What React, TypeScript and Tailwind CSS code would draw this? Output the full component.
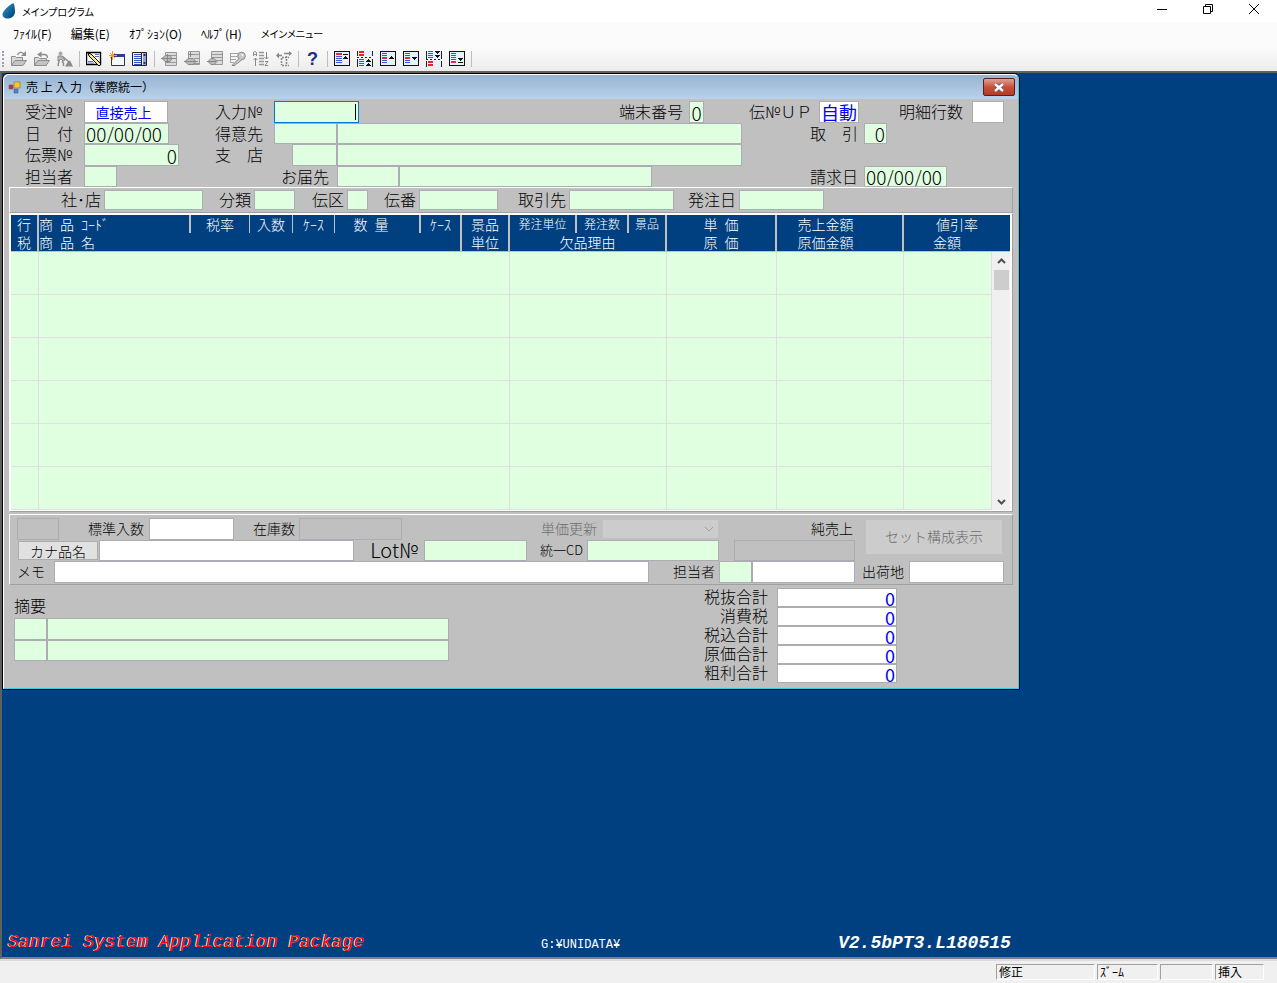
import React from 'react';

type BoxProps = {
  id: string
  label?: string
  className?: string
  value?: string
  disabled?: boolean
}

const Box: React.FC<BoxProps> = ({ id, label, className = 'bg-[#e0ffe0]', value = '', disabled }) => (
  <input
    id={id}
    type="text"
    aria-label={label}
    defaultValue={value}
    disabled={disabled}
    className={`h-full min-w-0 border border-[#abadb3] px-px outline-none ${className}`}
  />
);

type LabelProps = {
  htmlFor: string
  className?: string
  children: React.ReactNode
}

const Label: React.FC<LabelProps> = ({ htmlFor, className = '', children }) => (
  <label htmlFor={htmlFor} className={`shrink-0 pb-[2px] whitespace-pre ${className}`}>{children}</label>
);

const Icon: React.FC<{ children: React.ReactNode }> = ({ children }) => (
  <svg width="16" height="16" viewBox="0 0 16 16" fill="none" className="block">{children}</svg>
);

const OpenIcon = () => (
  <Icon>
    <path d="M.5 14.500v-9h4l1 1h6v3" fill="#d8d8d8" stroke="#8c8c8c" />
    <path d="M.5 14.500 4 9.500h11.500l-3.500 5z" fill="#c4c4c4" stroke="#8c8c8c" />
    <path d="M6.500 4c1-3 4-3.500 6.500-1" stroke="#8c8c8c" strokeWidth="1.300" />
    <path d="M10 5h5V0z" fill="#8c8c8c" />
  </Icon>
);

const BackIcon = () => (
  <Icon>
    <path d="M.5 14.500v-8h4l1 1h7v7z" fill="#d8d8d8" stroke="#8c8c8c" />
    <path d="M.5 14.500 4 9.500h11.500l-3.500 5z" fill="#c4c4c4" stroke="#8c8c8c" />
    <path d="M6 3.500h4c2.500 0 3.500 1 3.500 3.500" stroke="#8c8c8c" strokeWidth="1.300" />
    <path d="M3 3.500 7.500.5v6z" fill="#8c8c8c" />
  </Icon>
);

const WorkIcon = () => (
  <Icon>
    <circle cx="3.500" cy="2.500" r="2" fill="#a8a8a8" />
    <path d="M1 5h4l3 4-2 1-2-2-2 2H1z" fill="#b8b8b8" stroke="#8c8c8c" />
    <path d="M2 9.500 1 15M5 10l1.500 2v3M5 5l7 6" stroke="#8c8c8c" strokeWidth="1.500" />
    <path d="m8 15.500 3-5 2-1 3 6z" fill="#8c8c8c" />
  </Icon>
);

const EditIcon = () => (
  <Icon>
    <path d="M.5 1.500h14v12H.5z" fill="#fff" stroke="#000" strokeWidth="1.400" />
    <path d="M2 10.500h5M2 12h6M9 3.500h4M9 5.500h4" stroke="#5577cc" />
    <path d="m2 2 3 1 10 10-2 2L3 5z" fill="#ffe680" stroke="#000" />
  </Icon>
);

const NewWindowIcon = () => (
  <Icon>
    <path d="M2.500 3.500h13v11h-13z" fill="#f4f8ff" stroke="#333" />
    <path d="M3 3h13v3H3z" fill="#29417e" />
    <path d="M3.500 0v9M0 4.500h8M1 2l5 5M6 2 1 7" stroke="#f0a020" />
  </Icon>
);

const ListIcon = () => (
  <Icon>
    <path d="M.5 1.500h14v13H.5z" fill="#e8eeff" stroke="#222" />
    <path d="M2 3.500h7M2 5.500h7M2 7.500h7M2 9.500h7M2 11.500h7M2 13.500h7" stroke="#3155c6" />
    <path d="M9.500 2v12" stroke="#222" />
    <path d="M11 2h3v12h-3z" fill="#8da2dc" />
    <path d="M11.500 4h2M11.500 12h2" stroke="#111" strokeWidth="1.500" />
  </Icon>
);

const InsertIcon = () => (
  <Icon>
    <path d="M4.500 1.500h11v13h-11zM5 4.500h10M5 11.500h10" fill="#dcdcdc" stroke="#989898" />
    <path d="M0 7.500h15M4 4.500h5l2 3-2 3H4l-3-3z" fill="#bbb" stroke="#888" />
    <path d="M6.500 3v9" stroke="#888" />
  </Icon>
);

const CopyRowIcon = () => (
  <Icon>
    <path d="M4.500.5h11v13h-11zM9 3.500h6M10 7.500h5M5 12.500h10" fill="#dcdcdc" stroke="#989898" />
    <path d="M0 10.500h14M4 7.500h5l3 3-3 3H4l-3-3zM4 3.500h5M6.500 1v5" fill="#bbb" stroke="#888" />
  </Icon>
);

const DeleteRowIcon = () => (
  <Icon>
    <path d="M4.500.5h11v13h-11zM5 3.500h10M5 6.500h10M8 9.500h7" fill="#dcdcdc" stroke="#989898" />
    <path d="M0 10.500h9M4 7.500h3l3 3-3 3H4l-3-3z" fill="#bbb" stroke="#888" />
  </Icon>
);

const KeyIcon = () => (
  <Icon>
    <path d="M0 2.500h8M0 5.500h7M0 8.500h6M0 11.500h4M.5 2v10" stroke="#a4a4a4" />
    <circle cx="11.500" cy="5" r="3.800" fill="#c8c8c8" stroke="#888" />
    <path d="m9 7.500-7 7h3l1.500-2h1l4.500-4" fill="#c8c8c8" stroke="#888" />
    <circle cx="12.500" cy="4" r="1" fill="#fff" />
  </Icon>
);

const SortIcon = () => (
  <Icon>
    <path d="M.5 5V1.500L2 .5l1.500 1V5M1 3.500h3M2.500 7v8M.5 9l2-2 2 2" stroke="#888" />
    <path d="M6 1.500h5M6 4.500h5M6 7.500h5M6 10.500h5M6 13.500h5" stroke="#989898" strokeWidth="1.500" />
    <path d="M13.500 1v7M11.500 6l2 2 2-2M12 10.500h3l-3 4h3" stroke="#888" />
  </Icon>
);

const MoveIcon = () => (
  <Icon>
    <path d="M1 4.500h5M8 2.500h6" stroke="#888" strokeWidth="1.500" />
    <path d="m0 4.500 3-3v6zM16 2.500l-3-2.500v5z" fill="#888" />
    <path d="M6 6.500h7M6 14.500h7M5.500 7v7M10.500 5v10" stroke="#888" strokeWidth="1.500" strokeDasharray="2 1" />
  </Icon>
);

const Sheet: React.FC<{ children: React.ReactNode }> = ({ children }) => (
  <svg width="16" height="16" viewBox="0 0 16 16" shapeRendering="crispEdges" className="block">
    <path d="M0 0h16v15H0z" fill="#111" />
    <path d="M1 1h14v13H1z" fill="#e4f2ff" />
    {children}
  </svg>
);

const FirstIcon = () => (
  <Sheet>
    <path d="M2 2h6v2H2z" fill="#e03040" />
    <path d="M2 5h6v1H2zM2 7h6v1H2zM2 9h6v1H2zM2 11h6v1H2z" fill="#3b55d8" />
    <path d="M9 3h5v1H9zM11 5h1v1h1v1h1v1H9V7h1V6h1z" fill="#111" />
  </Sheet>
);

const PrevPageIcon = () => (
  <svg width="16" height="16" viewBox="0 0 16 16" shapeRendering="crispEdges" className="block">
    <path d="M1 0h14v5H1zM1 8h14v7H1z" fill="#e4f2ff" />
    <path d="M0 0h1v5H0zM15 0h1v5h-1zM0 8h1v8H0zM15 8h1v8h-1zM0 6h2v1H0zM4 6h2v1H4zM8 6h2v1H8zM12 6h2v1h-2z" fill="#222" />
    <path d="M2 0h5v2H2zM2 3h5v2H2z" fill="#f02020" />
    <path d="M2 8h5v1H2zM2 10h5v1H2zM2 12h5v1H2zM2 14h5v1H2z" fill="#3b55d8" />
    <path d="M11 8h1v1h1v1h1v1H9v-1h1V9h1zM11 12h1v1h1v1h1v1H9v-1h1v-1h1z" fill="#111" />
  </svg>
);

const PrevIcon = () => (
  <Sheet>
    <path d="M2 2h5v1H2zM2 4h5v1H2zM2 9h5v1H2zM2 11h5v1H2z" fill="#3b55d8" />
    <path d="M2 6h5v2H2z" fill="#e03040" />
    <path d="M11 5h1v1h1v1h1v1H9V7h1V6h1z" fill="#111" />
  </Sheet>
);

const NextIcon = () => (
  <Sheet>
    <path d="M2 2h5v1H2zM2 4h5v1H2zM2 9h5v1H2zM2 11h5v1H2z" fill="#3b55d8" />
    <path d="M2 6h5v2H2z" fill="#e03040" />
    <path d="M9 6h5v1h-1v1h-1v1h-1V8h-1V7H9z" fill="#111" />
  </Sheet>
);

const NextPageIcon = () => (
  <svg width="16" height="16" viewBox="0 0 16 16" shapeRendering="crispEdges" className="block">
    <path d="M1 0h14v8H1zM1 10h14v5H1z" fill="#e4f2ff" />
    <path d="M0 0h1v8H0zM15 0h1v8h-1zM0 10h1v6H0zM15 10h1v6h-1zM0 8h2v1H0zM4 8h2v1H4zM8 8h2v1H8zM12 8h2v1h-2z" fill="#222" />
    <path d="M2 0h5v1H2zM2 2h5v1H2zM2 4h5v1H2zM2 6h5v1H2z" fill="#3b55d8" />
    <path d="M2 10h5v2H2zM2 13h5v2H2z" fill="#f02020" />
    <path d="M9 0h5v1h-1v1h-1v1h-1V2h-1V1H9zM9 4h5v1h-1v1h-1v1h-1V6h-1V5H9z" fill="#111" />
  </svg>
);

const LastIcon = () => (
  <Sheet>
    <path d="M2 2h5v1H2zM2 4h5v1H2zM2 6h5v1H2zM2 8h5v1H2z" fill="#3b55d8" />
    <path d="M2 10h5v2H2z" fill="#e03040" />
    <path d="M9 7h5v1h-1v1h-1v1h-1V9h-1V8H9zM9 11h5v1H9z" fill="#111" />
  </Sheet>
);

const HelpIcon = () => <span className="block text-center font-['Liberation_Sans'] text-lg leading-4 font-bold text-[#1a2f8c]">?</span>;

const toolGroups = [
  [
    { name: '開く', icon: OpenIcon },
    { name: '戻る', icon: BackIcon },
    { name: '作業', icon: WorkIcon },
  ],
  [
    { name: '編集', icon: EditIcon },
    { name: '新規', icon: NewWindowIcon },
    { name: '一覧', icon: ListIcon },
  ],
  [
    { name: '行挿入', icon: InsertIcon },
    { name: '行複写', icon: CopyRowIcon },
    { name: '行削除', icon: DeleteRowIcon },
    { name: '検索', icon: KeyIcon },
    { name: '並べ替え', icon: SortIcon },
    { name: '移動', icon: MoveIcon },
  ],
  [{ name: 'ヘルプ', icon: HelpIcon }],
  [
    { name: '先頭', icon: FirstIcon },
    { name: '前頁', icon: PrevPageIcon },
    { name: '前行', icon: PrevIcon },
    { name: '次行', icon: NextIcon },
    { name: '次頁', icon: NextPageIcon },
    { name: '最終', icon: LastIcon },
  ],
];

const TitleBar = () => (
  <header className="flex h-[22px] items-center bg-white">
    <svg width="16" height="16" viewBox="0 0 16 16" className="ml-[2px]">
      <defs>
        <linearGradient id="drop" x1="0" y1="0" x2="1" y2="1">
          <stop offset="0" stopColor="#2c9fd0" />
          <stop offset="1" stopColor="#00386b" />
        </linearGradient>
      </defs>
      <path d="M10.500.5C6 3 .5 8 .5 11.500c0 2.500 2.500 4 5.500 4 4 0 7-3 7-7 0-3-.5-5.500-1-7.500-.3-.8-.8-.9-1.500-.5z" fill="url(#drop)" />
    </svg>
    <h1 className="ml-1 text-[10px] font-normal [font-feature-settings:'palt']">メインプログラム</h1>
    <div className="ml-auto flex h-full">
      <button aria-label="最小化" className="flex w-[46px] items-center justify-center">
        <svg width="10" height="10" viewBox="0 0 10 10"><path d="M0 3.500h10" stroke="#000" /></svg>
      </button>
      <button aria-label="元に戻す" className="flex w-[46px] items-center justify-center pb-1">
        <svg width="10" height="10" viewBox="0 0 10 10" fill="none" stroke="#000"><path d="M.5 2.500h7v7h-7zM2.500 2.500v-2h7v7h-2" /></svg>
      </button>
      <button aria-label="閉じる" className="flex w-[46px] items-center justify-center pb-1">
        <svg width="10" height="10" viewBox="0 0 10 10"><path d="m0 0 10 10M10 0 0 10" stroke="#000" /></svg>
      </button>
    </div>
  </header>
);

const Menu = () => (
  <nav className="flex h-6 items-center gap-[19px] bg-[#fbfbfb] pl-[13px] text-xs font-normal">
    <button>ﾌｧｲﾙ(F)</button>
    <button>編集(E)</button>
    <button>ｵﾌﾟｼｮﾝ(O)</button>
    <button>ﾍﾙﾌﾟ(H)</button>
    <button className="text-[10px] [font-feature-settings:'palt']">メインメニュー</button>
  </nav>
);

const Toolbar = () => (
  <div className="flex h-[25px] items-center bg-linear-to-b from-[#fcfcfc] to-[#ececec]">
    <div className="mr-[3px] ml-[2px] h-4 w-[2px] border-l-2 border-dotted border-gray-400" />
    {toolGroups.map((group, i) => (
      <div key={i} className="flex items-center">
        {group.map(({ name, icon: ToolIcon }) => (
          <button key={name} aria-label={name} className="flex h-5 w-[23px] items-center justify-center">
            <ToolIcon />
          </button>
        ))}
        <div className="mr-[2px] ml-[3px] h-4 w-px bg-[#bdbdbd]" />
      </div>
    ))}
  </div>
);

const Header = () => (
  <section className="pt-[2px] text-base leading-5">
    <div className="flex h-[22px] items-center">
      <div className="flex h-full w-[208px] items-center">
        <Label htmlFor="orderNo" className="w-20 pl-[21px]">受注№</Label>
        <Box id="orderNo" value="直接売上" className="w-[84px] bg-white pr-[6px] text-center text-sm font-normal text-[#0000ff]" />
      </div>
      <div className="flex h-full flex-1 items-center pr-[42px]">
        <Label htmlFor="entryNo" className="w-[62px] pl-[3px]">入力№</Label>
        <div className="flex h-full w-[85px] items-center border border-[#0078d7] bg-[#e0ffe0] pr-[2px]">
          <input id="entryNo" type="text" className="min-w-0 flex-1 outline-none" />
          <span className="h-4 w-px bg-black" />
        </div>
        <Label htmlFor="terminalNo" className="mr-[6px] ml-auto">端末番号</Label>
        <Box id="terminalNo" value="0" className="w-[15px] bg-[#e0ffe0] text-center text-[19px]" />
      </div>
      <div className="flex h-full w-[272px] items-center">
        <Label htmlFor="slipUp" className="w-[73px] pl-[3px]">伝№ＵＰ</Label>
        <Box id="slipUp" value="自動" className="w-10 bg-white text-right text-lg font-normal text-[#0000ff]" />
        <Label htmlFor="lineCount" className="w-[113px] pl-10">明細行数</Label>
        <Box id="lineCount" className="w-8 bg-white" />
      </div>
    </div>
    <div className="flex h-[21px] items-center">
      <div className="flex h-full w-[208px] items-center">
        <Label htmlFor="date" className="w-20 pl-[21px]">日　付</Label>
        <Box id="date" value="00/00/00" className="w-[85px] bg-[#e0ffe0] text-[19px]" />
      </div>
      <div className="flex h-full flex-1 items-center pr-1">
        <Label htmlFor="customer" className="w-[62px] pl-[3px]">得意先</Label>
        <Box id="customer" className="w-[63px] bg-[#e0ffe0]" />
        <Box id="customerName" label="得意先名" className="flex-1 bg-[#e0ffe0]" />
      </div>
      <div className="flex h-full w-[272px] items-center">
        <Label htmlFor="deal" className="w-[118px] pl-16">取　引</Label>
        <Box id="deal" value="0" className="w-[23px] bg-[#e0ffe0] text-right text-[19px]" />
      </div>
    </div>
    <div className="flex h-[22px] items-center">
      <div className="flex h-full w-[208px] items-center">
        <Label htmlFor="slipNo" className="w-20 pl-[21px]">伝票№</Label>
        <Box id="slipNo" value="0" className="w-[95px] bg-[#e0ffe0] text-right text-[19px]" />
      </div>
      <div className="flex h-full flex-1 items-center pr-1">
        <Label htmlFor="branch" className="w-20 pl-[3px]">支　店</Label>
        <Box id="branch" className="w-[45px] bg-[#e0ffe0]" />
        <Box id="branchName" label="支店名" className="flex-1 bg-[#e0ffe0]" />
      </div>
      <div className="w-[272px]" />
    </div>
    <div className="flex h-[21px] items-center">
      <div className="flex h-full w-[208px] items-center">
        <Label htmlFor="staff" className="w-20 pl-[21px]">担当者</Label>
        <Box id="staff" className="w-[33px] bg-[#e0ffe0]" />
      </div>
      <div className="flex h-full flex-1 items-center">
        <Label htmlFor="deliverTo" className="w-[125px] pl-[69px]">お届先</Label>
        <Box id="deliverTo" className="w-[62px] bg-[#e0ffe0]" />
        <Box id="deliverToName" label="お届先名" className="w-[253px] bg-[#e0ffe0]" />
      </div>
      <div className="flex h-full w-[272px] items-center">
        <Label htmlFor="billDate" className="w-[118px] pl-16">請求日</Label>
        <Box id="billDate" value="00/00/00" className="w-[83px] bg-[#e0ffe0] text-[19px]" />
      </div>
    </div>
  </section>
);

const CodePanel = () => (
  <section className="mx-[5px] flex h-[26px] items-center border border-t-white border-r-[#a0a0a0] border-b-[#a0a0a0] border-l-white py-[2px] text-right text-base leading-5">
    <Label htmlFor="shop" className="w-[94px] pr-[3px]">社･店</Label>
    <Box id="shop" className="w-[99px] bg-[#e0ffe0]" />
    <Label htmlFor="kind" className="w-[51px] pr-[3px]">分類</Label>
    <Box id="kind" className="w-[41px] bg-[#e0ffe0]" />
    <Label htmlFor="slipType" className="w-[52px] pr-[3px]">伝区</Label>
    <Box id="slipType" className="w-[21px] bg-[#e0ffe0]" />
    <Label htmlFor="slipNumber" className="w-[51px] pr-[3px]">伝番</Label>
    <Box id="slipNumber" className="w-[79px] bg-[#e0ffe0]" />
    <Label htmlFor="partner" className="w-[71px] pr-[3px]">取引先</Label>
    <Box id="partner" className="w-[105px] bg-[#e0ffe0]" />
    <Label htmlFor="orderDate" className="w-[65px] pr-[3px]">発注日</Label>
    <Box id="orderDate" className="w-[85px] bg-[#e0ffe0]" />
  </section>
);

const Scrollbar = () => (
  <div className="flex h-[258px] flex-col items-center bg-[#f0f0f0]">
    <svg width="15" height="18" viewBox="0 0 15 18"><path d="m4 11 3.500-3.500L11 11" fill="none" stroke="#505050" strokeWidth="2" /></svg>
    <div className="h-5 w-[15px] bg-[#cdcdcd]" />
    <svg width="15" height="18" viewBox="0 0 15 18" className="mt-auto"><path d="m4 8 3.500 3.500L11 8" fill="none" stroke="#505050" strokeWidth="2" /></svg>
  </div>
);

const DetailTable = () => (
  <section className="mx-[5px] border border-t-white border-r-[#a0a0a0] border-b-[#a0a0a0] border-l-white bg-white pt-px pr-[2px] pb-px pl-px">
    <table className="w-full table-fixed border-separate border-spacing-0">
      <colgroup>
        <col className="w-7" />
        <col />
        <col className="w-[59px]" />
        <col className="w-[43px]" />
        <col className="w-[42px]" />
        <col className="w-[86px]" />
        <col className="w-[41px]" />
        <col className="w-12" />
        <col className="w-[67px]" />
        <col className="w-[52px]" />
        <col className="w-[38px]" />
        <col className="w-[110px]" />
        <col className="w-[127px]" />
        <col className="w-[88px]" />
        <col className="w-[18px]" />
      </colgroup>
      <thead className="bg-[#004080] text-sm leading-[18px] whitespace-pre text-white [&_th]:border-[#c0c0c0] [&_th]:p-0 [&_th]:font-light">
        <tr className="h-[18px]">
          <th className="border-r-2">行</th>
          <th className="border-r-2 text-left">商{'\u2002'}品{'\u2002'}ｺｰﾄﾞ</th>
          <th className="border-r">税率</th>
          <th className="border-r">入数</th>
          <th className="border-r">ｹｰｽ</th>
          <th className="border-r-2"><span className="pr-3">数{'\u2002'}量</span></th>
          <th className="border-r-2">ｹｰｽ</th>
          <th className="border-r-2">景品</th>
          <th className="border-r-2 text-xs leading-[18px]">発注単位</th>
          <th className="border-r-2 text-xs leading-[18px]">発注数</th>
          <th className="border-r-2 text-xs leading-[18px]">景品</th>
          <th className="border-r-2">単{'\u2002'}価</th>
          <th className="border-r-2"><span className="pr-7">売上金額</span></th>
          <th colSpan={2}>値引率</th>
        </tr>
        <tr className="h-[19px]">
          <th className="border-r-2 border-b">税</th>
          <th colSpan={6} className="border-r-2 border-b text-left">商{'\u2002'}品{'\u2002'}名</th>
          <th className="border-r-2 border-b">単位</th>
          <th colSpan={3} className="border-r-2 border-b">欠品理由</th>
          <th className="border-r-2 border-b">原{'\u2002'}価</th>
          <th className="border-r-2 border-b"><span className="pr-7">原価金額</span></th>
          <th colSpan={2} className="border-b"><span className="pr-5">金額</span></th>
        </tr>
      </thead>
      <tbody className="bg-[#e0ffe0] [&_td]:border-[#dfdfdf] [&_td]:p-0">
        {[1, 2, 3, 4, 5, 6].map((line) => (
          <tr key={line} className="h-[43px]">
            <td className="border-r border-b" />
            <td colSpan={7} className="border-r border-b" />
            <td colSpan={3} className="border-r border-b" />
            <td className="border-r border-b" />
            <td className="border-r border-b" />
            <td className="border-r border-b" />
            {line === 1 && <td rowSpan={6}><Scrollbar /></td>}
          </tr>
        ))}
      </tbody>
    </table>
  </section>
);

const ItemPanel = () => (
  <section className="mx-[5px] mt-[2px] border border-t-white border-r-[#a0a0a0] border-b-[#a0a0a0] border-l-white pt-[3px] pb-px text-sm leading-5">
    <div className="flex">
      <div className="min-w-0 flex-1">
        <div className="flex h-[22px] items-center pl-[7px] text-right">
          <Box id="itemState" label="区分" disabled className="w-[42px] bg-[#c0c0c0]" />
          <Label htmlFor="stdQty" className="w-[90px] pr-[5px]">標準入数</Label>
          <Box id="stdQty" className="w-[85px] bg-white" />
          <Label htmlFor="stock" className="w-[65px] pr-1">在庫数</Label>
          <Box id="stock" disabled className="w-[103px] bg-[#c0c0c0]" />
          <Label htmlFor="priceUpdate" className="w-[201px] pr-[6px] text-[#6d6d6d]">単価更新</Label>
          <div className="relative flex h-[18px] w-[115px]">
            <select id="priceUpdate" disabled className="w-full appearance-none bg-[#cccccc]" />
            <svg width="10" height="6" viewBox="0 0 10 6" className="absolute top-[6px] right-1"><path d="m1 1 4 4 4-4" fill="none" stroke="#a0a0a0" /></svg>
          </div>
          <Label htmlFor="netSales" className="mr-[2px] ml-auto">純売上</Label>
        </div>
        <div className="flex h-[21px] items-center pl-2 text-right">
          <button className="h-[19px] w-20 border border-[#adadad] bg-[#e1e1e1] text-center leading-4">カナ品名</button>
          <Box id="kanaName" label="カナ品名" className="ml-px w-[255px] bg-white" />
          <Label htmlFor="lotNo" className="w-[70px] pr-[6px] text-xl leading-5">Lot№</Label>
          <Box id="lotNo" className="w-[103px] bg-[#e0ffe0]" />
          <Label htmlFor="unifiedCd" className="w-[60px] pr-1 text-[13px]">統一CD</Label>
          <Box id="unifiedCd" className="w-[132px] bg-[#e0ffe0]" />
          <Box id="netSales" disabled className="ml-[15px] flex-1 bg-[#c0c0c0]" />
        </div>
      </div>
      <button disabled className="mt-[2px] mr-[10px] ml-[11px] h-[34px] w-[136px] bg-[#cccccc] pb-[2px] text-[#6d6d6d]">セット構成表示</button>
    </div>
    <div className="flex h-[22px] items-center pr-2 pl-[7px] text-right">
      <Label htmlFor="memo" className="w-[37px] text-left">メモ</Label>
      <Box id="memo" className="flex-1 bg-white" />
      <Label htmlFor="itemStaff" className="w-[70px] pr-1">担当者</Label>
      <Box id="itemStaff" className="w-[33px] bg-[#e0ffe0]" />
      <Box id="itemStaffName" label="担当者名" className="w-[103px] bg-white" />
      <Label htmlFor="shipFrom" className="w-[54px] pr-[5px]">出荷地</Label>
      <Box id="shipFrom" className="w-[95px] bg-white" />
    </div>
  </section>
);

const totals = [
  { id: 'net', label: '税抜合計' },
  { id: 'tax', label: '消費税' },
  { id: 'gross', label: '税込合計' },
  { id: 'cost', label: '原価合計' },
  { id: 'profit', label: '粗利合計' },
];

const Summary = () => (
  <section className="flex justify-between pt-[3px] pr-[121px] pb-[5px] pl-[10px] text-base">
    <div className="w-[435px] pt-[6px]">
      <Label htmlFor="note1" className="block leading-[22px]">摘要</Label>
      <div className="flex h-[22px]">
        <Box id="note1" className="w-[33px] bg-[#e0ffe0]" />
        <Box id="note1Text" label="摘要1" className="flex-1 bg-[#e0ffe0]" />
      </div>
      <div className="flex h-[21px]">
        <Box id="note2" label="摘要2" className="w-[33px] bg-[#e0ffe0]" />
        <Box id="note2Text" label="摘要2" className="flex-1 bg-[#e0ffe0]" />
      </div>
    </div>
    <div>
      {totals.map(({ id, label }) => (
        <div key={id} className="flex h-[19px] items-center justify-end">
          <Label htmlFor={id} className="pr-[9px] leading-[19px]">{label}</Label>
          <Box id={id} value="0" className="w-[120px] bg-white text-right text-lg font-normal text-[#0000ff]" />
        </div>
      ))}
    </div>
  </section>
);

const SalesWindow = () => (
  <div className="w-full max-w-[1018px] rounded-t-md border border-black bg-[#c0c0c0]">
    <div className="rounded-t-md border border-t-white border-r-[#40c8e8] border-b-[#40c8e8] border-l-white">
      <div className="flex h-6 items-center rounded-t-md bg-linear-to-b from-[#98b4d2] to-[#b9d1ea] pr-[3px] pl-1">
        <svg width="13" height="13" viewBox="0 0 13 13" stroke="#555" strokeWidth=".5">
          <path d="M6 1h6v6H6z" fill="#ffc423" />
          <path d="M1 4h4v4H1z" fill="#d03020" />
          <path d="M6 8h4v4H6z" fill="#4a80e0" />
        </svg>
        <h2 className="ml-[5px] text-xs font-normal whitespace-pre">売 上 入 力（業際統一）</h2>
        <button aria-label="閉じる" className="ml-auto flex h-[18px] w-8 items-center justify-center rounded-xs border border-[#5a2020] bg-linear-to-b from-[#e0a095] via-[#c8503c] to-[#b83820]">
          <svg width="12" height="9" viewBox="0 0 12 9"><path d="m2 1 8 7M10 1 2 8" stroke="#555" strokeWidth="4" /><path d="m2 1 8 7M10 1 2 8" stroke="#fff" strokeWidth="2.500" /></svg>
        </button>
      </div>
      <Header />
      <CodePanel />
      <DetailTable />
      <ItemPanel />
      <Summary />
    </div>
  </div>
);

const StatusBar = () => (
  <footer className="flex h-6 items-center justify-end gap-[2px] border-t-2 border-[#dcdcdc] bg-[#f0f0f0] pr-[13px] text-xs leading-[14px] font-normal [&>span]:h-4 [&>span]:border [&>span]:border-t-[#a0a0a0] [&>span]:border-r-white [&>span]:border-b-white [&>span]:border-l-[#a0a0a0] [&>span]:pl-[2px]">
    <span className="w-[99px]">修正</span>
    <span className="w-[61px]">ｽﾞｰﾑ</span>
    <span className="w-[53px]" />
    <span className="w-[49px]">挿入</span>
  </footer>
);

const App: React.FC = () => (
  <div className="flex min-h-screen flex-col bg-white font-['Noto_Sans_CJK_JP',sans-serif] font-light text-black">
    <TitleBar />
    <Menu />
    <Toolbar />
    <main className="flex flex-1 flex-col border-t-2 border-b-2 border-l-2 border-t-[#606060] border-b-[#808080] border-l-[#606060] bg-[#004080]">
      <SalesWindow />
      <div className="mt-auto grid grid-cols-[539fr_297fr_439fr] items-center font-['Liberation_Mono',monospace] text-white">
        <p className="pl-[6px] text-lg text-[#ff0000] italic [text-shadow:-1px_0_#fff]">Sanrei System Application Package</p>
        <p className="pt-[6px] text-xs">G:¥UNIDATA¥</p>
        <p className="pt-[3px] text-lg font-bold italic">V2.5bPT3.L180515</p>
      </div>
    </main>
    <StatusBar />
  </div>
);

export default App;
